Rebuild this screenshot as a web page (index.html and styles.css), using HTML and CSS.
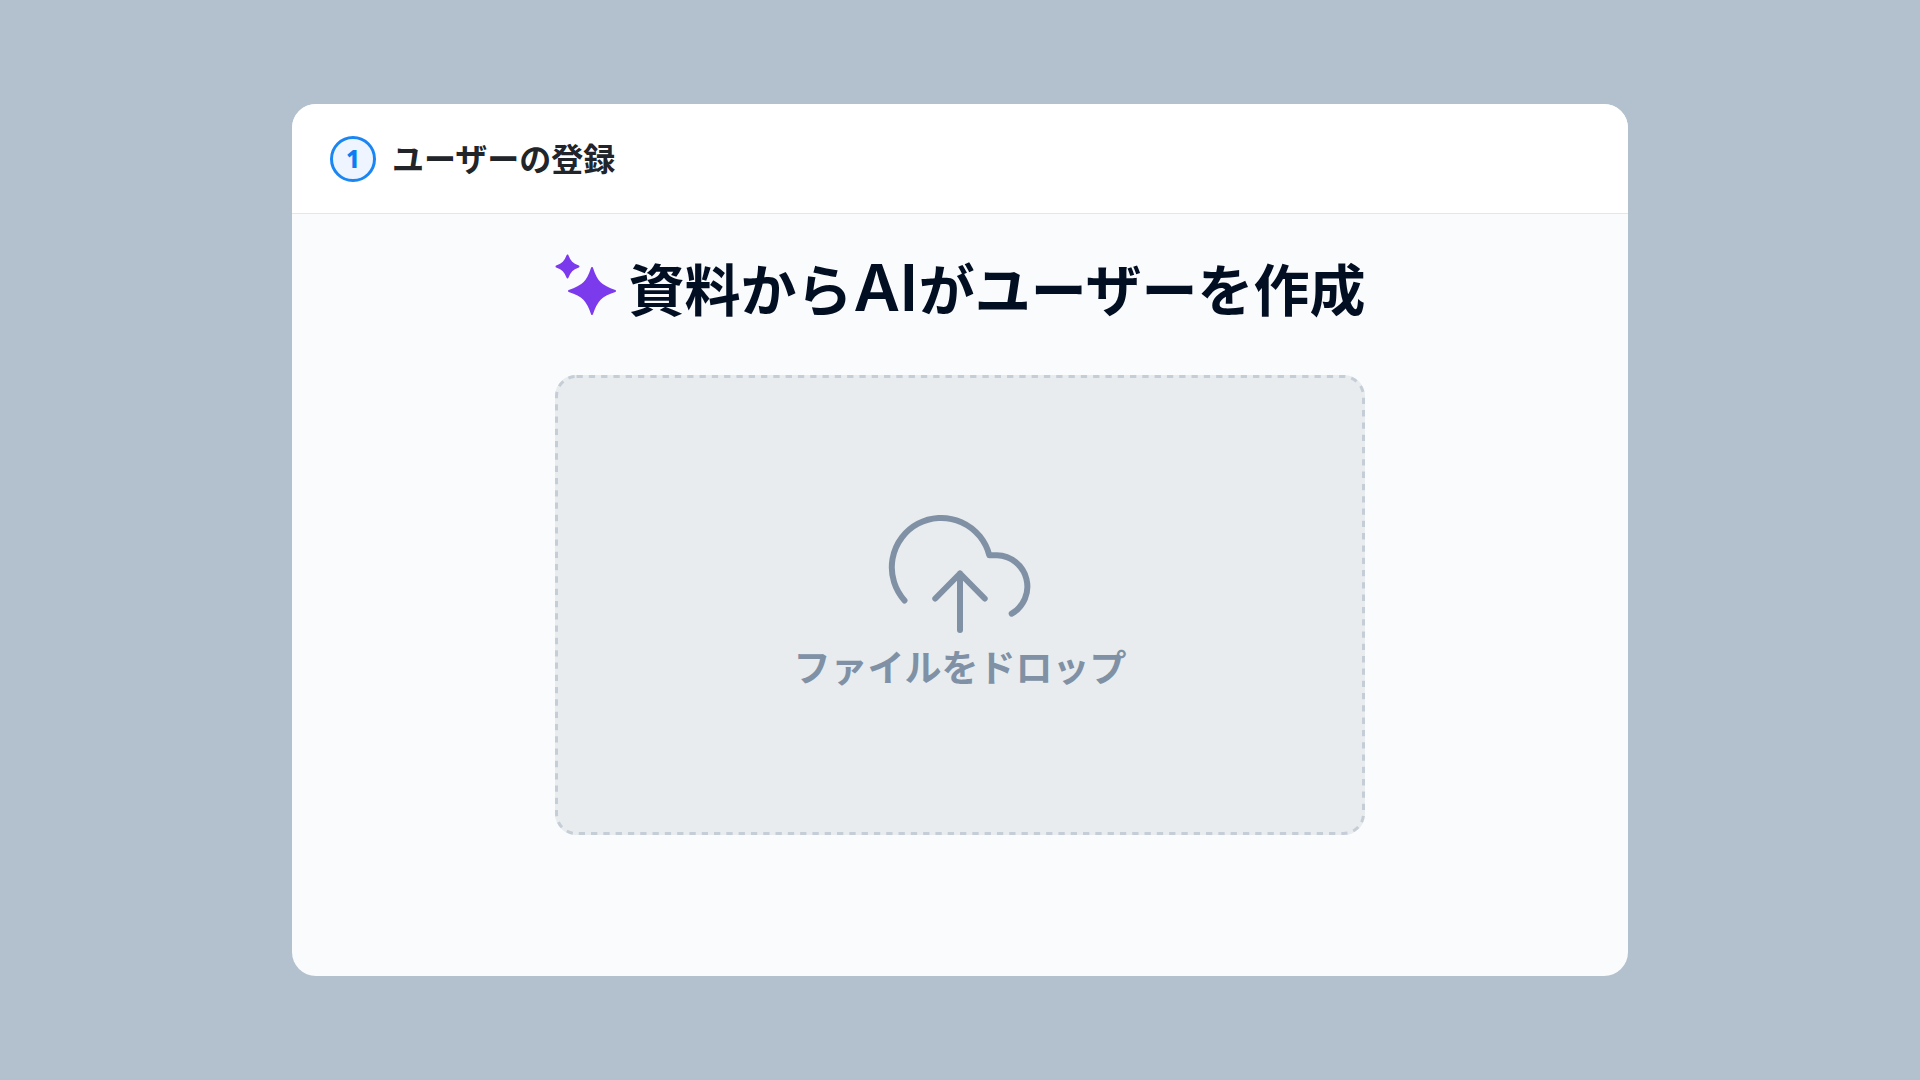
FILE: index.html
```html
<!DOCTYPE html>
<html lang="ja">
<head>
<meta charset="utf-8">
<meta name="viewport" content="width=device-width, initial-scale=1">
<title>ユーザーの登録</title>
<link rel="stylesheet" href="styles.css">
</head>
<body>
<main class="card">
  <header class="card-header">
    <span class="step">1</span>
    <h1 class="card-title">ユーザーの登録</h1>
  </header>
  <section class="card-body">
    <h2 class="headline">
      <svg class="sparkles" viewBox="0 0 62 64" aria-hidden="true">
        <path d="M38 15C42.5 29 47 33.500 61 38C47 42.500 42.500 47 38 61C33.500 47 29 42.500 15 38C29 33.500 33.500 29 38 15Z"/>
        <path d="M13.500 2.500C16 9 18 11 24.500 13.500C18 16 16 18 13.500 24.500C11 18 9 16 2.500 13.500C9 11 11 9 13.500 2.500Z"/>
      </svg>
      <span>資料から<span class="latin">AI</span>がユーザーを作成</span>
    </h2>
    <label class="dropzone">
      <svg class="dropzone-outline" aria-hidden="true"><rect x="1.5" y="1.5" rx="20"/></svg>
      <input class="file-input" type="file">
      <svg class="cloud" viewBox="28 24 144 120" aria-hidden="true">
        <path d="M44.500 110.500A49.500 49.500 0 1 1 129.300 65.300H137A31.300 31.300 0 0 1 151.700 123.700"/>
        <path d="M100 140V83.500M75.300 108.500L100 83.500L124.700 108.500"/>
      </svg>
      <span class="dropzone-text">ファイルをドロップ</span>
    </label>
  </section>
</main>
</body>
</html>
```
FILE: styles.css
```css
* {
  box-sizing: border-box;
}

body {
  margin: 0;
  min-height: 100vh;
  padding: 104px 24px;
  display: flex;
  justify-content: center;
  background: #b3c0ce;
  font-family: "Noto Sans CJK JP", "Noto Sans", sans-serif;
  font-weight: 700;
}

.card {
  width: 100%;
  max-width: 1336px;
  display: flex;
  flex-direction: column;
  overflow: hidden;
  border-radius: 24px;
  background: #fafbfd;
}

.card-header {
  display: flex;
  align-items: center;
  gap: 16px;
  padding: 32px 38px 31px;
  border-bottom: 1px solid #e3e6ea;
  background: #fff;
}

.step {
  width: 46px;
  height: 46px;
  display: flex;
  align-items: center;
  justify-content: center;
  border: 3px solid #1a86f4;
  border-radius: 50%;
  background: #eef5ff;
  color: #0d7ef2;
  font-family: "Noto Sans", sans-serif;
  font-size: 24px;
  font-weight: 800;
  line-height: 32px;
}

.card-title {
  margin: 0;
  padding-bottom: 4px;
  color: #212429;
  font-size: 32px;
  line-height: 42px;
}

.card-body {
  display: flex;
  flex-direction: column;
  align-items: center;
  gap: 54px;
  padding: 39px 24px;
}

.headline {
  margin: 0;
  display: flex;
  align-items: flex-start;
  gap: 12px;
  color: #020f23;
  font-size: 56px;
  line-height: 68px;
}

.latin {
  padding: 0 1px;
  font-family: Inter, sans-serif;
  font-size: 64px;
  font-weight: 600;
  line-height: 1;
}

.sparkles {
  width: 62px;
  height: 64px;
  flex: none;
  fill: #7c3aed;
  stroke: #7c3aed;
  stroke-width: 2;
  stroke-linejoin: round;
}

.dropzone {
  position: relative;
  width: 100%;
  max-width: 810px;
  min-height: 460px;
  padding-bottom: 2px;
  display: flex;
  flex-direction: column;
  align-items: center;
  justify-content: center;
  gap: 4px;
  border-radius: 21px;
  background: #e8ecef;
  color: #8091a5;
  cursor: pointer;
}

.dropzone-outline {
  position: absolute;
  inset: 0;
  width: 100%;
  height: 100%;
}

.dropzone-outline rect {
  width: calc(100% - 3px);
  height: calc(100% - 3px);
  fill: none;
  stroke: #c5cdd7;
  stroke-width: 3;
  stroke-dasharray: 6.3 6;
}

.file-input {
  position: absolute;
  width: 1px;
  height: 1px;
  opacity: 0;
}

.cloud {
  width: 144px;
  height: 120px;
  fill: none;
  stroke: currentColor;
  stroke-width: 6;
  stroke-linecap: round;
  stroke-linejoin: round;
}

.dropzone-text {
  font-size: 37px;
  line-height: 56px;
}
```
